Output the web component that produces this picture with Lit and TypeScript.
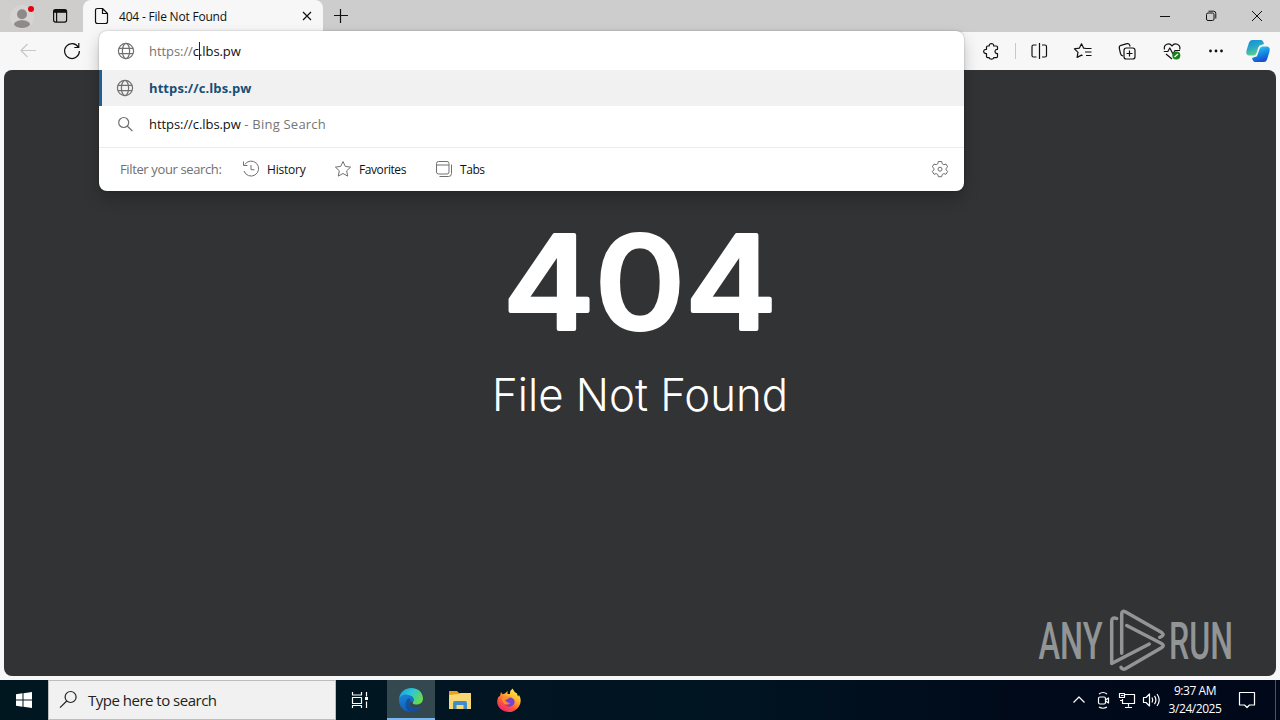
import {LitElement, css, html, svg} from 'lit';
import type {TemplateResult} from 'lit';
import {customElement, property} from 'lit/decorators.js';
import {classMap} from 'lit/directives/class-map.js';

const globe = svg`<circle cx="12" cy="12" r="7.6"/><ellipse cx="12" cy="12" rx="3.6" ry="7.6"/><path d="M5 9.3h14M5 14.7h14"/>`;

// Every icon is drawn on a 24px grid, one unit per pixel
const Icons: Record<string, TemplateResult> = {
  profile: svg`<circle cx="12" cy="12" r="12" fill="#d6d3d2" stroke="none"/><circle cx="12" cy="9.2" r="5" fill="#8e8a88" stroke="none"/><path d="M4 19.8c0-6 16-6 16 0-3.4 4.4-12.600 4.4-16 0z" fill="#8e8a88" stroke="none"/><circle cx="21" cy="4" r="3" fill="#e3000f" stroke="none"/>`,
  tabActions: svg`<rect x="5.600" y="5.600" width="13" height="12.500" rx="2"/><path d="M5.600 7.300h13" stroke-width="3"/><path d="M8.600 8v10"/>`,
  file: svg`<path d="M6.500 6.500q0-2 2-2h5l5 5v8q0 2-2 2h-8q-2 0-2-2zM13.500 4.500v5h5"/>`,
  close: svg`<path d="M8 8l8 8M16 8l-8 8"/>`,
  plus: svg`<path d="M5 11.500h14M11.500 5v14"/>`,
  minimize: svg`<path d="M7 12.500h10"/>`,
  restore: svg`<rect x="7.500" y="9" width="7.500" height="7.500" rx="1.500"/><path d="M9.500 7.200h5q2.300 0 2.300 2.300v5"/>`,
  closeWindow: svg`<path d="M7 7l10 10M17 7l-10 10"/>`,
  back: svg`<path d="M20 11.500H5M11.500 5L5 11.500l6.500 6.500"/>`,
  reload: svg`<path d="M18.300 8.200A7.400 7.400 0 1 0 19.400 12M18.800 4v4.500h-4.500"/>`,
  extensions: svg`<path d="M8.500 7h1.700c-.3-3.300 4.800-3.300 4.500 0h2.800q1 0 1 1v2.300c-3.300-.4-3.300 4.600 0 4.300v3q0 1-1 1h-2.800c.2 2-4.700 2-4.500 0H8.500q-1 0-1-1v-3c-3.800.3-3.800-4.600 0-4.300V8q0-1 1-1z"/>`,
  split: svg`<path d="M9.500 6h-3q-1.500 0-1.500 1.500v9Q5 18 6.500 18h3M12.500 4v16M15 6h3q1.500 0 1.500 1.500v9q0 1.500-1.500 1.500h-3"/>`,
  favorites: svg`<path d="M15 9.500l-2.300-.3-2.200-4.400-2.200 4.400-4.900.7L7 13.400l-.9 5 4.400-2.300 1 .6M15 9.500h5.500M14 13h6.500M15 16.500h5.500"/>`,
  collections: svg`<path d="M8 17c-1.500-.3-2.200-1.300-2.500-2.500L4.300 9.300Q4 7 6 6.300l6-1.700q2-.4 2.700 1.500l.4 1.400"/><rect x="9" y="9" width="11" height="11" rx="2.300"/><path d="M14.500 11.500v6M11.500 14.500h6"/>`,
  health: svg`<path d="M4.500 10.500C3.200 5 9.500 3 12 7c2.500-4 9-2 7.700 3.500M3.800 12.500h4l2-3.500 3.200 6 2-3.500h5M6 15l6 5"/><circle cx="16.300" cy="16.500" r="4" fill="#16821b" stroke="none"/><path d="M14.500 18l3.500-3" stroke="#fff"/>`,
  more: svg`<g fill="currentColor" stroke="none"><circle cx="6.500" cy="12" r="1.400"/><circle cx="12" cy="12" r="1.400"/><circle cx="17.500" cy="12" r="1.400"/></g>`,
  copilot: svg`<defs><linearGradient id="cp1" x2=".4" y2="1"><stop stop-color="#118bdd"/><stop offset=".55" stop-color="#2aa9c5"/><stop offset="1" stop-color="#5ed386"/></linearGradient><linearGradient id="cp2" x2=".4" y2="1"><stop stop-color="#43d7ee"/><stop offset=".5" stop-color="#1795e8"/><stop offset="1" stop-color="#1452d0"/></linearGradient></defs><g stroke="none"><path d="M6 1h9q2 0 3 4l-3 1q-2 0-2.700 2.500L10.500 14q-.8 2.500-3 2.500H3Q-1 16 .8 10.500L3 3.500Q4 1 6 1z" fill="url(#cp1)"/><path d="M18 23H9q-2 0-3-4l3-1q2 0 2.700-2.500l1.800-5.500q.8-2.500 3-2.500H21q4 .5 2.200 6L21 20.500q-1 2.500-3 2.500z" fill="url(#cp2)"/></g>`,
  globe,
  search: svg`<circle cx="10.700" cy="10.500" r="5"/><path d="M14.200 14l5.200 5"/>`,
  history: svg`<path d="M5.800 7.500A7.500 7.500 0 1 1 5 14M4.500 4.500v4h4M12 8v4.700h3.500"/>`,
  star: svg`<path d="M12 4.500l2.300 4.900 5.300.7-3.900 3.700 1 5.300-4.700-2.600-4.700 2.600 1-5.300-3.900-3.700 5.300-.7z"/>`,
  tabs: svg`<rect x="4.500" y="4.500" width="12.500" height="12.500" rx="2"/><path d="M4.500 8h12.500M19.500 7.500v9q0 3-3 3h-9"/>`,
  settings: svg`<path d="M10.300 4.500h3.400l.5 2.300 1.600.9 2.200-.7 1.700 2.900-1.700 1.500v1.500l1.700 1.500-1.700 2.900-2.200-.7-1.600.9-.5 2.200h-3.400l-.5-2.200-1.600-.9-2.200.7-1.700-2.900L6 12.900v-1.500L4.300 9.900 6 7l2.200.7 1.600-.9z"/><circle cx="12" cy="12.200" r="2"/>`,
  windows: svg`<path d="M4 6.200l6.500-.9v6.200H4zM11.500 5.200L20 4v7.500h-8.500zM4 12.500h6.500v6.200L4 17.800zM11.500 12.500H20V20l-8.500-1.200z" fill="#fff" stroke="none"/>`,
  searchTask: svg`<circle cx="14.600" cy="9" r="5.500"/><path d="M10.700 13L4 19.700"/>`,
  taskView: svg`<path d="M4.500 4v3h9V4M4.500 9.500h9v6h-9zM4.500 20v-2.500h9V20M18.500 4v4.500M18.500 13.500V20"/><rect x="17" y="9" width="3" height="3" fill="#fff" stroke="none"/>`,
  edge: svg`<defs><linearGradient id="ed1" x2="1" y2=".5"><stop stop-color="#199ce3"/><stop offset=".55" stop-color="#2fc8d1"/><stop offset="1" stop-color="#69d94f"/></linearGradient><linearGradient id="ed2" x2=".5" y2="1"><stop stop-color="#1a86dc"/><stop offset="1" stop-color="#115ab4"/></linearGradient></defs><g stroke="none"><path d="M.2 11C1-3.500 23.500-3.500 24 10.500c0 4.500-3.500 6-7 6-3 0-4-1.300-3-2.500 2-3.300-.7-6.500-4.500-6.500C5 7.500 1.500 8.500.2 11z" fill="url(#ed1)"/><path d="M.1 13C-.5 7 6.500 5.500 10 7.300c3.500.7 5.500 4 4 6.700-2.500-1-4.500 1-3.300 3.500 1.300 3 6.300 4.200 11.300 1-2.500 4-6.500 5.500-10.500 5.400C5 23.700.3 19 .1 13z" fill="url(#ed2)"/><path d="M10 10c-4 1.500-5.500 12 2 14 4.500 0 8-2 10-5.500-5 3.200-10 2-11.300-1-1-2.500.5-4 1.300-5z" fill="#114b95" opacity=".75"/></g>`,
  explorer: svg`<g stroke="none"><path d="M1 3h8l2 2h12v16H1z" fill="#e8a31c"/><path d="M1 7l10-1 2-1h10v16H1z" fill="#f8d775"/><path d="M5 21v-6q0-2 2-2h10q2 0 2 2v6h-3.500v-4h-7v4z" fill="#3f8cc8"/></g>`,
  firefox: svg`<defs><linearGradient id="ff1" x1=".8" y1="0" x2=".2" y2="1"><stop stop-color="#fff44f"/><stop offset=".35" stop-color="#ffb62b"/><stop offset=".65" stop-color="#ff5a36"/><stop offset="1" stop-color="#ef1a77"/></linearGradient></defs><g stroke="none"><path d="M4 4l1.500 2.300L8 5.500 10.500 3v3l2.500 0Q12.500 3 15.500.500 17 4 20 5.500l1 3 1-1.500C27 15 20 24 12 24S-2.500 17 1.300 9L3 8z" fill="url(#ff1)"/><path d="M7.500 11q3.500.5 5-1.500c3.500 0 5.500 2 5 5.500-1 4-8 5-10 1.500l4 .3 2-1.800q-3.500.3-6-4z" fill="#7541cf"/><path d="M5 10q3-3 7.500-1l-2 2.300-3 1q1 2 3.500 2.500l-1.500 2Q5.500 16 5 10z" fill="#ff9030"/></g>`,
  chevron: svg`<path d="M6.500 14.500L12 9l5.500 5.500"/>`,
  camera: svg`<rect x="7.500" y="9" width="7" height="7" rx="1.500"/><path d="M14.500 12l3-2v5l-3-2M8 6q4-3 8 0M8 19q4 2.500 8 0"/>`,
  network: svg`<path d="M10 6.500h9.500v9H7.500V11M13.500 15.500v3.300M10 19.500h7M4.500 5.500h5v4h-5zM5 12.500h2.500M6 7.500h2.500"/>`,
  volume: svg`<path d="M4.500 9.500H7l3.500-3.500v12L7 14.500H4.500zM13 9.500q1.500 2.500 0 5M15.500 7.800q2.800 4.200 0 8.400M18 6q4.400 6 0 12"/>`,
  notifications: svg`<path d="M4.500 4.500h15v12.500h-5L12 19.500 9.500 17h-5z"/>`,
};

const WindowButtons = ['minimize', 'restore', 'closeWindow'];

const ToolbarButtons = [
  'split',
  'favorites',
  'collections',
  'health',
  'more',
];

const Filters = [
  {icon: 'history', label: 'History', cls: 'history'},
  {icon: 'star', label: 'Favorites', cls: 'favorites'},
  {icon: 'tabs', label: 'Tabs', cls: 'tabs'},
];

@customElement('ui-icon')
export class UiIcon extends LitElement {
  @property()
  name = '';

  static styles = css`
    :host {
      display: inline-flex;
      flex: none;
      width: 24px;
      height: 24px;
    }

    svg {
      width: 100%;
      height: 100%;
      overflow: visible;
      fill: none;
      stroke: currentColor;
      stroke-width: var(--stroke, 1.2);
      stroke-linejoin: round;
    }
  `;

  render() {
    return html`<svg viewBox="0 0 24 24">${Icons[this.name]}</svg>`;
  }
}

@customElement('browser-suggest')
export class BrowserSuggest extends LitElement {
  static styles = css`
    :host {
      display: block;
      box-sizing: border-box;
      overflow: hidden;
      border-radius: 8px;
      background: #fff;
      color: #111;
      font-size: 13px;
    }

    .row {
      display: flex;
      align-items: center;
      height: 36px;
      box-sizing: border-box;
      padding-left: 14px;
      gap: 12px;
      white-space: pre;
    }

    .row ui-icon {
      color: #707070;
    }

    .input {
      height: 39px;
      padding: 1px 0 0 15px;
      gap: 11px;
      letter-spacing: -0.07px;
    }

    .scheme,
    .muted {
      color: #757575;
    }

    .caret {
      display: inline-block;
      width: 1px;
      height: 18px;
      margin: -2px -1px 0 0;
      background: #222;
      vertical-align: middle;
    }

    .active {
      padding-left: 11px;
      border-left: 3px solid #1d5f92;
      background: #f1f1f1;
      color: #174e78;
      font-weight: 700;
      letter-spacing: 0.09px;
    }

    .result {
      letter-spacing: -0.07px;
    }

    .muted {
      letter-spacing: 0.22px;
    }

    .filters {
      display: flex;
      align-items: center;
      height: 42px;
      margin-top: 5px;
      padding: 0 12px 0 21px;
      border-top: 1px solid #ececec;
      white-space: pre;
    }

    .caption {
      width: 119px;
      color: #707070;
      letter-spacing: -0.37px;
    }

    .filter {
      display: flex;
      align-items: center;
      gap: 4px;
      font-size: 12px;
      letter-spacing: -0.42px;
    }

    .filter ui-icon,
    .gear {
      color: #707070;
      --stroke: 1;
    }

    .history {
      width: 92px;
      letter-spacing: -0.2px;
    }

    .favorites {
      width: 101px;
    }

    .gear {
      margin-left: auto;
    }
  `;

  render() {
    return html`
      <div class="row input">
        <ui-icon name="globe"></ui-icon>
        <span><span class="scheme">https://</span>c<i class="caret"></i>.lbs.pw</span>
      </div>
      <div class="row active">
        <ui-icon name="globe"></ui-icon><span>https://c.lbs.pw</span>
      </div>
      <div class="row result">
        <ui-icon name="search"></ui-icon>
        <span>https://c.lbs.pw<span class="muted"> - Bing Search</span></span>
      </div>
      <div class="filters">
        <span class="caption">Filter your search:</span>
        ${Filters.map(
          ({icon, label, cls}) => html`<div class="filter ${cls}">
            <ui-icon name=${icon}></ui-icon><span>${label}</span>
          </div>`
        )}
        <ui-icon class="gear" name="settings"></ui-icon>
      </div>
    `;
  }
}

@customElement('task-bar')
export class TaskBar extends LitElement {
  static styles = css`
    :host {
      display: flex;
      height: 40px;
      background: linear-gradient(90deg, #001720, #001522 55%, #000a1a 80%, #000819);
      color: #fff;
    }

    .cell {
      display: flex;
      align-items: center;
      justify-content: center;
      box-sizing: border-box;
      width: 48px;
    }

    .search {
      display: flex;
      align-items: center;
      gap: 8px;
      box-sizing: border-box;
      width: 288px;
      padding-left: 7px;
      border: 1px solid #bdbdbd;
      background: #f1f1f1;
      color: #222;
      font-size: 15px;
      letter-spacing: -0.5px;
      white-space: nowrap;
    }

    .apps {
      display: flex;
      gap: 1px;
      margin-left: 3px;
    }

    .cell.running {
      padding-top: 2px;
      border-bottom: 2px solid #79b8ec;
      background: #344850;
    }

    .tray {
      display: flex;
      align-items: center;
      margin-left: auto;
    }

    .clock {
      width: 64px;
      font-size: 12px;
      line-height: 18px;
      letter-spacing: -0.45px;
      text-align: center;
      white-space: nowrap;
    }

    .notifications {
      margin: 0 16px 0 8px;
    }

    .desktop {
      align-self: stretch;
      width: 4px;
      border-left: 1px solid #4b535e;
    }
  `;

  renderApp(name: string) {
    return html`<div
      class=${classMap({cell: true, running: name === 'edge'})}
    >
      <ui-icon name=${name}></ui-icon>
    </div>`;
  }

  render() {
    return html`
      <div class="cell"><ui-icon name="windows"></ui-icon></div>
      <div class="search">
        <ui-icon name="searchTask"></ui-icon><span>Type here to search</span>
      </div>
      <div class="cell"><ui-icon name="taskView"></ui-icon></div>
      <div class="apps">
        ${['edge', 'explorer', 'firefox'].map((name) => this.renderApp(name))}
      </div>
      <div class="tray">
        <ui-icon name="chevron"></ui-icon>
        <ui-icon name="camera"></ui-icon>
        <ui-icon name="network"></ui-icon>
        <ui-icon name="volume"></ui-icon>
        <div class="clock"><div>9:37 AM</div><div>3/24/2025</div></div>
        <ui-icon class="notifications" name="notifications"></ui-icon>
        <div class="desktop"></div>
      </div>
    `;
  }
}

@customElement('app-root')
export class AppRoot extends LitElement {
  static styles = css`
    :host {
      display: flex;
      flex-direction: column;
      position: relative;
      width: 1280px;
      height: 720px;
      overflow: hidden;
      background: #f7f7f7;
      color: #111;
      font-family: 'Open Sans', 'Noto Sans', sans-serif;
    }

    .titlebar {
      display: flex;
      align-items: center;
      height: 32px;
      background: linear-gradient(90deg, #d0cdcc, #cdcdcd 8%);
    }

    .profile {
      margin: 1px 14px 0 10px;
    }

    .tab {
      display: flex;
      align-items: center;
      box-sizing: border-box;
      width: 240px;
      height: 32px;
      margin-left: 11px;
      padding: 0 4px 0 6px;
      border-radius: 8px 8px 0 0;
      background: #f7f7f7;
      font-size: 12px;
      letter-spacing: -0.2px;
    }

    .title {
      flex: 1;
      margin-left: 6px;
      white-space: nowrap;
    }

    .new-tab {
      margin-left: 6px;
    }

    .window-buttons {
      display: flex;
      gap: 22px;
      margin: 0 11px 0 auto;
      --stroke: 1;
    }

    .toolbar {
      display: flex;
      align-items: center;
      height: 38px;
      padding-left: 16px;
    }

    .back {
      color: #c8c8c8;
    }

    .reload {
      margin-left: 20px;
    }

    .actions {
      display: flex;
      align-items: center;
      gap: 20.2px;
      margin: 0 10px 0 auto;
    }

    .separator {
      width: 1px;
      height: 16px;
      margin: 0 -9px 0 -8px;
      background: #c8c8c8;
    }

    .copilot {
      margin-left: -2px;
    }

    .page {
      display: flex;
      flex-direction: column;
      align-items: center;
      height: 606px;
      margin: 0 4px;
      border-radius: 8px;
      background: #313335;
    }

    .code {
      flex: none;
      width: 300px;
      height: 176px;
      margin-top: 117px;
      fill: #fff;
      stroke: #fff;
      stroke-width: 4px;
      stroke-linejoin: round;
      font: 500 129px Inter, sans-serif;
    }

    .message {
      flex: none;
      width: 310px;
      height: 64px;
      fill: #fff;
      font: 300 45px Inter, sans-serif;
    }

    .watermark {
      flex: none;
      align-self: flex-end;
      width: 204px;
      height: 70px;
      margin: auto 36px 0 0;
      fill: #929596;
      font: 500 52px Roboto, sans-serif;
    }

    .watermark path {
      fill: none;
      stroke: #929596;
      stroke-width: 3.5px;
      stroke-linecap: round;
      stroke-linejoin: round;
    }

    task-bar {
      margin-top: 4px;
    }

    .suggest {
      position: absolute;
      top: 31px;
      left: 99px;
      width: 865px;
      height: 160px;
      border-radius: 8px;
      box-shadow: 0 0 2px rgba(0, 0, 0, 0.3), 0 8px 16px rgba(0, 0, 0, 0.22);
    }
  `;

  renderTitlebar() {
    return html`<div class="titlebar">
      <ui-icon class="profile" name="profile"></ui-icon>
      <ui-icon name="tabActions"></ui-icon>
      <div class="tab">
        <ui-icon name="file"></ui-icon>
        <span class="title">404 - File Not Found</span>
        <ui-icon name="close"></ui-icon>
      </div>
      <ui-icon class="new-tab" name="plus"></ui-icon>
      <div class="window-buttons">
        ${WindowButtons.map((name) => html`<ui-icon name=${name}></ui-icon>`)}
      </div>
    </div>`;
  }

  renderToolbar() {
    return html`<div class="toolbar">
      <ui-icon class="back" name="back"></ui-icon>
      <ui-icon class="reload" name="reload"></ui-icon>
      <div class="actions">
        <ui-icon name="extensions"></ui-icon>
        <div class="separator"></div>
        ${ToolbarButtons.map((name) => html`<ui-icon name=${name}></ui-icon>`)}
        <ui-icon class="copilot" name="copilot"></ui-icon>
      </div>
    </div>`;
  }

  renderPage() {
    return html`<div class="page">
      <svg class="code" viewBox="0 0 300 176">
        <text x="13" y="142" textLength="274" lengthAdjust="spacingAndGlyphs">404</text>
      </svg>
      <svg class="message" viewBox="0 0 310 64">
        <text x="7" y="47.5" textLength="296" lengthAdjust="spacingAndGlyphs">File Not Found</text>
      </svg>
      <svg class="watermark" viewBox="0 0 204 70">
        <text x="2.500" y="53" textLength="64" lengthAdjust="spacingAndGlyphs">ANY</text>
        <path d="M80.700 12.500q-5-2-5 3v42L113.300 38M85.700 47.300V8q0-4 4-2l36 20.500q3.500 3-2 4.800M90.700 19.500L125.500 37.500q3.500 2 0 4.200L89 63q-2.500 1-4-1.700"/>
        <text x="133" y="53" textLength="64" lengthAdjust="spacingAndGlyphs">RUN</text>
      </svg>
    </div>`;
  }

  render() {
    return html`
      ${this.renderTitlebar()} ${this.renderToolbar()} ${this.renderPage()}
      <task-bar></task-bar>
      <browser-suggest class="suggest"></browser-suggest>
    `;
  }
}
